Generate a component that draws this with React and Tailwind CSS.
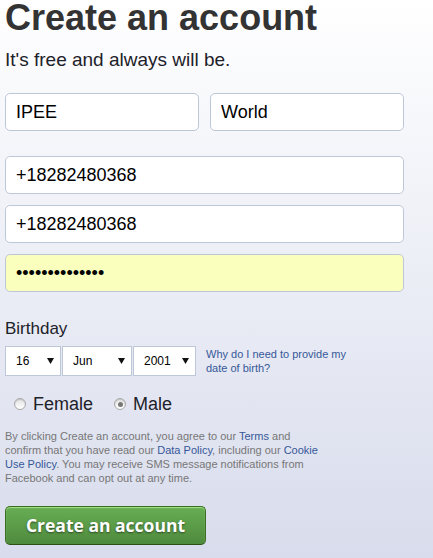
import { useState } from "react";

const days = Array.from({ length: 31 }, (_, i) => String(i + 1));
const months = ["Jan", "Feb", "Mar", "Apr", "May", "Jun", "Jul", "Aug", "Sep", "Oct", "Nov", "Dec"];
const years = Array.from({ length: 60 }, (_, i) => String(2017 - i));

function TextField({ value, type = "text", className = "" }) {
  return (
    <input
      type={type}
      defaultValue={value}
      className={`h-[38px] rounded-[5px] border border-[#bdc7d8] px-[10px] text-[18px] text-black outline-none ${className}`}
    />
  );
}

function Dropdown({ value, options, width }) {
  return (
    <div className={`relative h-[30px] ${width}`}>
      <select
        defaultValue={value}
        className="h-full w-full appearance-none border border-[#bdc7d8] bg-white pl-[10px] text-[12px] text-black outline-none"
      >
        {options.map((o) => (
          <option key={o}>{o}</option>
        ))}
      </select>
      <svg
        className="pointer-events-none absolute right-[7px] top-[12px]"
        width="7"
        height="6"
        viewBox="0 0 7 6"
      >
        <path d="M0 0h7L3.5 6z" fill="#111" />
      </svg>
    </div>
  );
}

function Radio({ label, checked, onClick }) {
  return (
    <label className="flex cursor-pointer items-center gap-[7px]" onClick={onClick}>
      <span className="flex h-[12px] w-[12px] items-center justify-center rounded-full border border-[#a8a8a8] bg-gradient-to-b from-[#e2e2e2] to-white shadow-[inset_0_1px_1px_rgba(0,0,0,0.15)]">
        {checked && <span className="h-[5px] w-[5px] rounded-full bg-[#777]" />}
      </span>
      <span className="text-[18px] leading-[22px] text-[#1d2129]">{label}</span>
    </label>
  );
}

export default function App() {
  const [gender, setGender] = useState("male");

  return (
    <div className="min-h-[558px] bg-gradient-to-b from-white to-[#d8dcec] px-[5px] pt-px font-['Liberation_Sans',Arial,sans-serif]">
      <h1 className="-mt-px text-[36px] font-bold leading-[36px] text-[#333]">Create an account</h1>
      <p className="mt-[13px] text-[19px] leading-[22px] text-[#1d2129]">It's free and always will be.</p>

      <div className="w-[399px]">
        <div className="mt-[22px] flex gap-[11px]">
          <TextField value="IPEE" className="w-[194px] bg-white" />
          <TextField value="World" className="w-[194px] bg-white" />
        </div>

        <div className="mt-[25px] flex flex-col gap-[11px]">
          <TextField value="+18282480368" className="w-full bg-white" />
          <TextField value="+18282480368" className="w-full bg-white" />
          <TextField value="passwordpass12" type="password" className="w-full bg-[#faffbd]" />
        </div>
      </div>

      <div className="mt-[27px] text-[17px] leading-[20px] text-[#1d2129]">Birthday</div>
      <div className="mt-[7px] flex items-center">
        <div className="flex gap-px">
          <Dropdown value="16" options={days} width="w-[56px]" />
          <Dropdown value="Jun" options={months} width="w-[70px]" />
          <Dropdown value="2001" options={years} width="w-[63px]" />
        </div>
        <a href="#" className="ml-[10px] w-[150px] text-[11px] leading-[14px] text-[#365899]">
          Why do I need to provide my date of birth?
        </a>
      </div>

      <div className="ml-[9px] mt-[17px] flex gap-[21px]">
        <Radio label="Female" checked={gender === "female"} onClick={() => setGender("female")} />
        <Radio label="Male" checked={gender === "male"} onClick={() => setGender("male")} />
      </div>

      <p className="mt-[14px] w-[320px] text-[11px] leading-[14px] text-[#777]">
        By clicking Create an account, you agree to our <a href="#" className="text-[#365899]">Terms</a> and
        confirm that you have read our <a href="#" className="text-[#365899]">Data Policy</a>, including our{" "}
        <a href="#" className="text-[#365899]">Cookie Use Policy</a>. You may receive SMS message notifications
        from Facebook and can opt out at any time.
      </p>

      <button className="mt-[21px] h-[39px] w-[201px] rounded-[5px] border border-[#3b6e22] border-b-[#2c5115] bg-gradient-to-b from-[#67ae55] to-[#4f8a3d] font-['Open_Sans',sans-serif] text-[17.5px] font-bold text-white shadow-[inset_0_1px_1px_#a4e388] [text-shadow:0_1px_2px_rgba(0,0,0,0.5)]">
        Create an account
      </button>
    </div>
  );
}
